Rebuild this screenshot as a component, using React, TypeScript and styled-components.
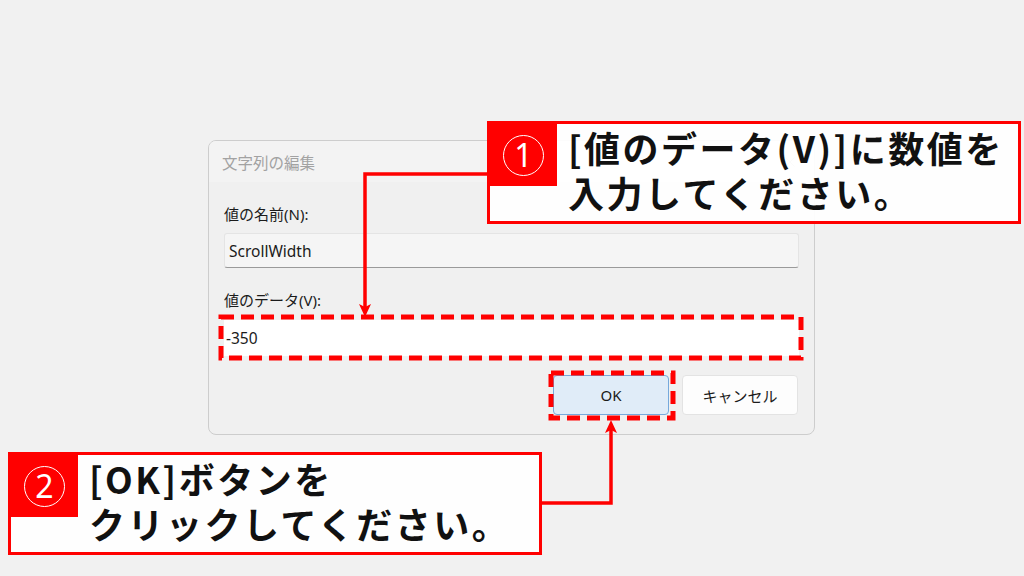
import React from "react";
import styled, { createGlobalStyle } from "styled-components";

const RED = "#ff0000";

interface CalloutProps {
   number: string;
   lines: string[];
   left: number;
   top: number;
}

const Callout = ({ number, lines, left, top }: CalloutProps) => (
   <CalloutBox $left={left} $top={top}>
      <Badge>
         <Circled>{number}</Circled>
      </Badge>
      <CalloutText>
         {lines.map((line) => (
            <Line key={line}>{line}</Line>
         ))}
      </CalloutText>
   </CalloutBox>
);

// the two leader lines with their arrow heads
const Connectors = () => (
   <Overlay width="1024" height="576" viewBox="0 0 1024 576">
      <g fill="none" stroke={RED} strokeWidth="3.5">
         <path d="M488 174 H365 V308" />
         <path d="M541 503 H611 V428" />
      </g>
      <g fill={RED}>
         <path d="M365 317 L359 304 L365 307 L371 304 Z" />
         <path d="M611 420 L605 433 L611 430 L617 433 Z" />
      </g>
   </Overlay>
);

interface MarkedProps {
   out: [number, number, number, number]; // top, right, bottom, left
   children: React.ReactNode;
}

const Marked = ({ out, children }: MarkedProps) => (
   <MarkWrap>
      {children}
      <DashFrame $t={out[0]} $r={out[1]} $b={out[2]} $l={out[3]}>
         <rect x="0" y="0" width="100%" height="100%" />
      </DashFrame>
   </MarkWrap>
);

const App = () => (
   <>
      <GlobalStyle />
      <Stage>
         <Dialog>
            <TitleBar>
               <Title>文字列の編集</Title>
               <CloseButton>
                  <svg width="10" height="10" viewBox="0 0 10 10">
                     <path d="M0.5 0.5 L9.5 9.5 M9.5 0.5 L0.5 9.5" stroke="#c4c4c4" strokeWidth="1" />
                  </svg>
               </CloseButton>
            </TitleBar>
            <Body>
               <Label>値の名前(N):</Label>
               <NameField>ScrollWidth</NameField>
               <Label>値のデータ(V):</Label>
               <Marked out={[2, 1.5, 2, 3.5]}>
                  <ValueField>-350</ValueField>
               </Marked>
               <ButtonRow>
                  <Marked out={[2.5, 3.5, 2.5, 2.5]}>
                     <DialogButton $primary>OK</DialogButton>
                  </Marked>
                  <DialogButton>キャンセル</DialogButton>
               </ButtonRow>
            </Body>
         </Dialog>
         <Connectors />
         <Callout number="1" lines={["[値のデータ(V)]に数値を", "入力してください。"]} left={487} top={121} />
         <Callout number="2" lines={["[OK]ボタンを", "クリックしてください。"]} left={8} top={452} />
      </Stage>
   </>
);

const GlobalStyle = createGlobalStyle`
   html, body {
      margin: 0;
      padding: 0;
      background: #f1f1f1;
   }
`;

const Stage = styled.div`
   position: relative;
   width: 1024px;
   height: 576px;
   overflow: hidden;
   display: flex;
   align-items: flex-start;
   justify-content: flex-start;
   padding: 140px 0 0 208px;
   box-sizing: border-box;
   font-family: "Noto Sans", "Noto Sans CJK JP", sans-serif;
`;

const Dialog = styled.div`
   width: 607px;
   height: 295px;
   box-sizing: border-box;
   border: 1px solid #cdcdcd;
   border-radius: 8px;
   background: #f0f0f0;
   overflow: hidden;
   display: flex;
   flex-flow: column;
`;

const TitleBar = styled.div`
   height: 41px;
   display: flex;
   align-items: center;
   justify-content: space-between;
   padding-left: 13px;
   background: #f3f3f3;
`;

const Title = styled.span`
   font-family: "Noto Sans CJK JP", sans-serif;
   font-size: 15.5px;
   color: #a2a2a2;
`;

const CloseButton = styled.div`
   width: 48px;
   height: 41px;
   display: flex;
   align-items: center;
   justify-content: center;
`;

const Body = styled.div`
   display: flex;
   flex-flow: column;
   padding: 0 15px 19px 15px;
`;

const Label = styled.div`
   margin-top: 22px;
   margin-bottom: 9px;
   height: 20px;
   line-height: 20px;
   font-size: 15px;
   color: #1b1b1b;
`;

const NameField = styled.div`
   height: 35px;
   box-sizing: border-box;
   border: 1px solid #e4e4e4;
   border-bottom: 1px solid #9a9a9a;
   border-radius: 3px;
   background: #f5f5f5;
   padding-left: 4px;
   display: flex;
   align-items: center;
   font-size: 15.5px;
   color: #1b1b1b;
`;

const MarkWrap = styled.div`
   position: relative;
   display: flex;
   flex-flow: column;
`;

const DashFrame = styled.svg<{ $t: number; $r: number; $b: number; $l: number }>`
   position: absolute;
   top: ${(p) => -p.$t}px;
   left: ${(p) => -p.$l}px;
   width: calc(100% + ${(p) => p.$l + p.$r}px);
   height: calc(100% + ${(p) => p.$t + p.$b}px);
   overflow: visible;
   pointer-events: none;

   rect {
      fill: none;
      stroke: ${RED};
      stroke-width: 5;
      stroke-dasharray: 13 7;
   }
`;

const ValueField = styled.div`
   height: 36px;
   box-sizing: border-box;
   background: #ffffff;
   padding-left: 2px;
   display: flex;
   align-items: center;
   font-size: 15.5px;
   color: #1b1b1b;
   margin-top: 1px;
`;

const ButtonRow = styled.div`
   display: flex;
   flex-flow: row;
   justify-content: flex-end;
   gap: 13px;
   margin-top: 19px;
   padding-right: 1px;
`;

const DialogButton = styled.div<{ $primary?: boolean }>`
   width: 116px;
   height: 40px;
   box-sizing: border-box;
   border: 1px solid ${(p) => (p.$primary ? "#76a9dc" : "#e3e3e3")};
   border-radius: 4px;
   background: ${(p) => (p.$primary ? "#e0ecf8" : "#fdfdfd")};
   display: flex;
   align-items: center;
   justify-content: center;
   font-family: "Noto Sans", "Noto Sans CJK JP", sans-serif;
   font-size: 15px;
   color: #1b1b1b;
`;

const Overlay = styled.svg`
   position: absolute;
   left: 0;
   top: 0;
   pointer-events: none;
`;

const CalloutBox = styled.div<{ $left: number; $top: number }>`
   position: absolute;
   left: ${(p) => p.$left}px;
   top: ${(p) => p.$top}px;
   width: 534px;
   height: 103px;
   box-sizing: border-box;
   border: 3px solid ${RED};
   background: rgba(255, 255, 255, 0.93);
   display: flex;
   flex-flow: row;
   align-items: flex-start;
`;

const Badge = styled.div`
   width: 67px;
   height: 62px;
   flex: none;
   background: ${RED};
   display: flex;
   align-items: center;
   justify-content: center;
`;

const Circled = styled.div`
   width: 41px;
   height: 41px;
   box-sizing: border-box;
   border: 1.6px solid #ffffff;
   border-radius: 50%;
   display: flex;
   align-items: center;
   justify-content: center;
   font-family: "Noto Sans", sans-serif;
   font-size: 32px;
   line-height: 1;
   color: #ffffff;
`;

const CalloutText = styled.div`
   display: flex;
   flex-flow: column;
   padding: 1px 0 0 11px;
   font-family: "Noto Sans CJK JP", sans-serif;
   font-weight: 700;
   font-size: 36px;
   letter-spacing: 2.5px;
   line-height: 45px;
   color: #111111;
   white-space: nowrap;
`;

const Line = styled.span`
   display: block;
`;

export default App;
